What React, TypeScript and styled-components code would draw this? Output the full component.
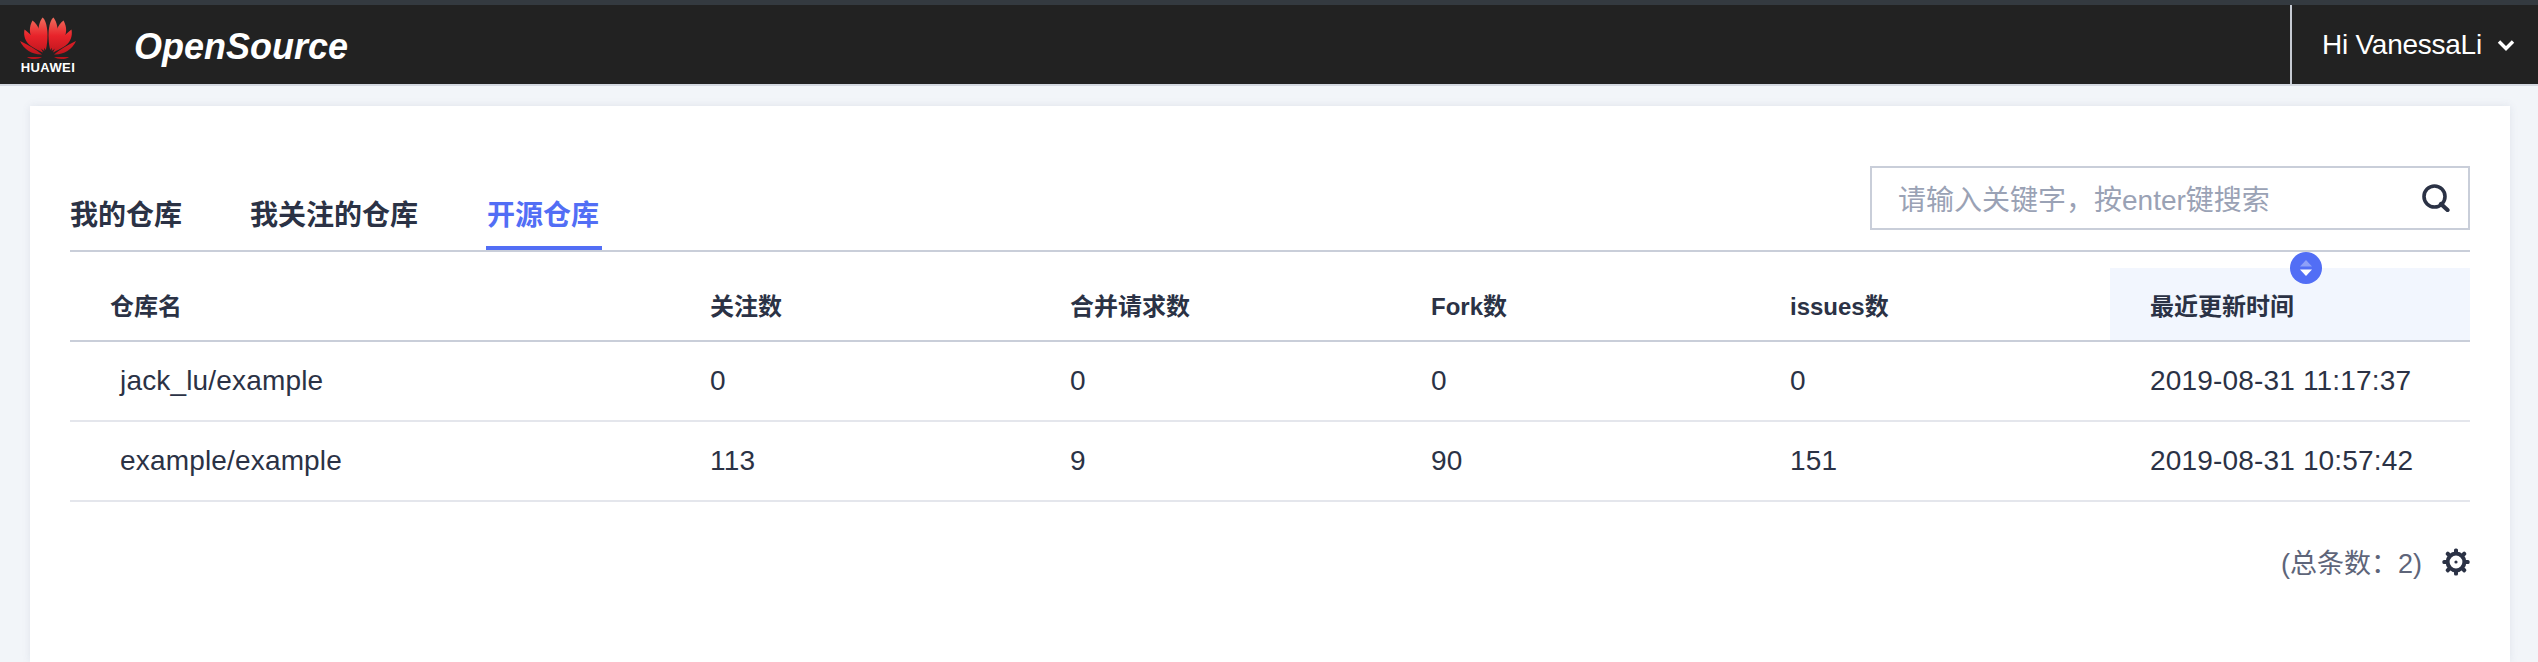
import React from "react";
import styled, { createGlobalStyle } from "styled-components";

const latin = `"Liberation Sans", "Noto Sans CJK SC", sans-serif`;

const GlobalStyle = createGlobalStyle`
html, body {
  margin: 0;
  padding: 0;
  height: 100%;
  background: #f2f5f9;
  overflow: hidden;
}
* {
  box-sizing: border-box;
}
`;

const Page = styled.div`
width: 2538px;
height: 662px;
display: flex;
flex-direction: column;
font-family: ${latin};
color: #2b3245;
overflow: hidden;
`;

const TopStrip = styled.div`
height: 5px;
background: #343a40;
`;

const NavBar = styled.div`
height: 81px;
flex-shrink: 0;
display: flex;
align-items: center;
background: #222222;
border-bottom: 2px solid #d4d9e1;
`;

const Brand = styled.div`
width: 56px;
margin-left: 20px;
display: flex;
flex-direction: column;
align-items: center;
`;

const BrandName = styled.div`
color: #ffffff;
font-size: 13px;
font-weight: bold;
line-height: 10px;
letter-spacing: 0.4px;
margin-top: 4px;
white-space: nowrap;
`;

const ProductName = styled.div`
margin-left: 58px;
padding-top: 4px;
color: #ffffff;
font-size: 36px;
font-weight: bold;
font-style: italic;
flex: 1;
`;

const UserMenu = styled.div`
height: 100%;
width: 248px;
border-left: 2px solid #c6cad2;
display: flex;
align-items: center;
padding-left: 30px;
gap: 15px;
color: #ffffff;
font-size: 28px;
letter-spacing: -0.25px;
white-space: nowrap;
`;

const Card = styled.div`
flex: 1;
margin: 20px 28px 0 30px;
padding: 60px 40px 0 40px;
background: #ffffff;
box-shadow: 0 0 8px rgba(90, 100, 130, 0.12);
`;

const Toolbar = styled.div`
height: 84px;
display: flex;
justify-content: space-between;
align-items: flex-start;
border-bottom: 2px solid #c9ced9;
box-sizing: content-box;
`;

const Tabs = styled.div`
height: 84px;
display: flex;
gap: 68px;
`;

const Tab = styled.div<{ $active?: boolean }>`
height: 84px;
padding-top: 28px;
font-size: 28px;
line-height: 44px;
font-weight: bold;
white-space: nowrap;
color: ${(p) => (p.$active ? "#526ef5" : "#2b3245")};
border-bottom: 4px solid ${(p) => (p.$active ? "#526ef5" : "transparent")};
${(p) => p.$active && "padding-left: 1px; padding-right: 3px;"}
`;

const SearchBox = styled.div`
width: 600px;
height: 64px;
border: 2px solid #c9ced9;
display: flex;
align-items: center;
justify-content: space-between;
padding: 0 18px 0 26px;
`;

const SearchPlaceholder = styled.span`
font-size: 28px;
color: #9aa2b5;
white-space: nowrap;
`;

const Table = styled.div`
margin-top: 16px;
`;

const Row = styled.div<{ $head?: boolean }>`
display: grid;
grid-template-columns: 600px 360px 361px 359px 360px 360px;
height: ${(p) => (p.$head ? "74px" : "80px")};
align-items: center;
border-bottom: 2px solid ${(p) => (p.$head ? "#c9ced9" : "#e4e6ec")};
`;

const HeadCell = styled.div<{ $sorted?: boolean }>`
position: relative;
height: 72px;
display: flex;
align-items: center;
padding-left: 40px;
font-size: 24px;
font-weight: bold;
white-space: nowrap;
background: ${(p) => (p.$sorted ? "#f2f6fe" : "transparent")};
`;

const Cell = styled.div<{ $first?: boolean }>`
padding-left: ${(p) => (p.$first ? "50px" : "40px")};
font-size: 28px;
letter-spacing: 0.17px;
white-space: nowrap;
color: #2b3245;
`;

const SortBadge = styled.div`
position: absolute;
left: 180px;
top: -16px;
width: 32px;
height: 32px;
border-radius: 50%;
background: #526ef5;
display: flex;
align-items: center;
justify-content: center;
`;

const Footer = styled.div`
display: flex;
justify-content: flex-end;
align-items: center;
gap: 20px;
height: 28px;
margin-top: 46px;
`;

const TotalText = styled.span`
padding-bottom: 2px;
font-size: 27px;
color: #5e6579;
white-space: nowrap;
`;

const leftPetals = [
  "M25.8 33C19 25 15 11 22.5 .5C27.5 4 29 20 25.8 33Z",
  "M24.3 34C15 28 5 17 12.5 3.5C18 7 24 20 24.3 34Z",
  "M23 35.5C14 31 2 27 4.5 12.5C11 17 19 26 23 35.5Z",
  "M22 37.5C13 38 4 33 0 24C8 28 16 32 22 37.5Z",
  "M22 40H7C9 41.5 13 42.5 15 42C18 42 20 41 22 40Z",
];

const HuaweiLogo = () => (
  <svg width="56" height="42" viewBox="0 0 56 42">
    <defs>
      <linearGradient id="petal" gradientUnits="userSpaceOnUse" x1="0" y1="0" x2="0" y2="42">
        <stop offset="0" stopColor="#f0705f" />
        <stop offset="0.45" stopColor="#e8232a" />
        <stop offset="1" stopColor="#b3121a" />
      </linearGradient>
    </defs>
    {leftPetals.map((d) => (
      <React.Fragment key={d}>
        <path d={d} fill="url(#petal)" />
        <path d={d} fill="url(#petal)" transform="matrix(-1 0 0 1 56 0)" />
      </React.Fragment>
    ))}
  </svg>
);

const Chevron = () => (
  <svg width="18" height="12" viewBox="0 0 18 12">
    <path d="M2 2.5L9 9.5L16 2.5" fill="none" stroke="#ffffff" strokeWidth="3.4" />
  </svg>
);

const SearchIcon = () => (
  <svg width="28" height="28" viewBox="0 0 28 28">
    <circle cx="12.5" cy="12.5" r="10.5" fill="none" stroke="#2b3245" strokeWidth="3.6" />
    <path d="M19 20L25.5 26" fill="none" stroke="#2b3245" strokeWidth="4.2" strokeLinecap="round" />
  </svg>
);

const SortIcon = () => (
  <svg width="14" height="18" viewBox="0 0 14 18">
    <path d="M7 1L13 7.5H1Z" fill="#ffffff" opacity="0.35" />
    <path d="M1 10.5H13L7 17Z" fill="#ffffff" />
  </svg>
);

const GearIcon = () => (
  <svg width="28" height="28" viewBox="0 0 28 28">
    <circle cx="14" cy="14" r="8.4" fill="none" stroke="#2b3245" strokeWidth="4" />
    <circle cx="14" cy="14" r="1.6" fill="#2b3245" />
    {[0, 45, 90, 135, 180, 225, 270, 315].map((a) => (
      <rect key={a} x="12" y="0.4" width="4" height="5" rx="1.6" fill="#2b3245" transform={`rotate(${a} 14 14)`} />
    ))}
  </svg>
);

const repos = [
  { name: "jack_lu/example", watch: 0, merge: 0, fork: 0, issues: 0, updated: "2019-08-31 11:17:37" },
  { name: "example/example", watch: 113, merge: 9, fork: 90, issues: 151, updated: "2019-08-31 10:57:42" },
];

const App: React.FC = () => {
  return (
    <Page>
      <GlobalStyle />
      <TopStrip />
      <NavBar>
        <Brand>
          <HuaweiLogo />
          <BrandName>HUAWEI</BrandName>
        </Brand>
        <ProductName>OpenSource</ProductName>
        <UserMenu>
          Hi VanessaLi
          <Chevron />
        </UserMenu>
      </NavBar>
      <Card>
        <Toolbar>
          <Tabs>
            <Tab>我的仓库</Tab>
            <Tab>我关注的仓库</Tab>
            <Tab $active>开源仓库</Tab>
          </Tabs>
          <SearchBox>
            <SearchPlaceholder>请输入关键字，按enter键搜索</SearchPlaceholder>
            <SearchIcon />
          </SearchBox>
        </Toolbar>
        <Table>
          <Row $head>
            <HeadCell>仓库名</HeadCell>
            <HeadCell>关注数</HeadCell>
            <HeadCell>合并请求数</HeadCell>
            <HeadCell>Fork数</HeadCell>
            <HeadCell>issues数</HeadCell>
            <HeadCell $sorted>
              最近更新时间
              <SortBadge>
                <SortIcon />
              </SortBadge>
            </HeadCell>
          </Row>
          {repos.map((r) => (
            <Row key={r.name}>
              <Cell $first>{r.name}</Cell>
              <Cell>{r.watch}</Cell>
              <Cell>{r.merge}</Cell>
              <Cell>{r.fork}</Cell>
              <Cell>{r.issues}</Cell>
              <Cell>{r.updated}</Cell>
            </Row>
          ))}
        </Table>
        <Footer>
          <TotalText>(总条数：2)</TotalText>
          <GearIcon />
        </Footer>
      </Card>
    </Page>
  );
};

export default App;
